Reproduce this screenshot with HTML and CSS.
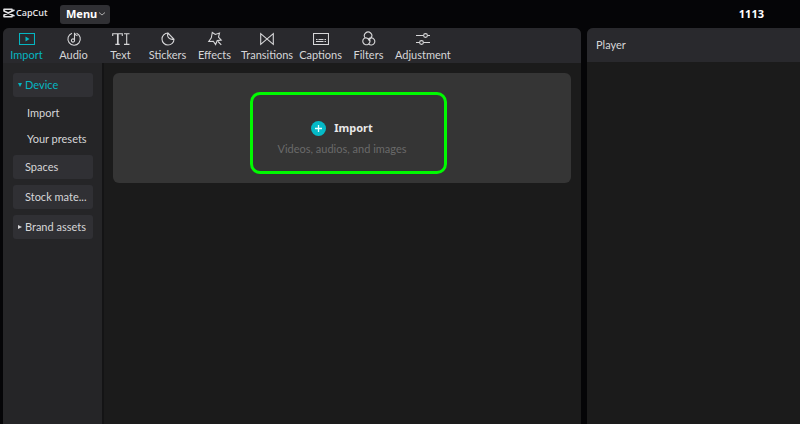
FILE: index.html
```html
<!DOCTYPE html>
<html lang="en">
<head>
<meta charset="utf-8">
<meta name="viewport" content="width=device-width, initial-scale=1">
<title>CapCut</title>
<link rel="stylesheet" href="styles.css">
</head>
<body>
<header class="topbar">
  <div class="brand">
    <svg class="brand-mark" width="12" height="10" viewBox="0 0 12 10" fill="none" stroke="currentColor" stroke-width="1.6" stroke-linejoin="round" aria-hidden="true">
      <path d="M9 3V1.200H1V3L11.500 8M9 7v1.800H1V7L11.500 2"/>
    </svg>
    <span>CapCut</span>
  </div>
  <button class="menu" type="button">Menu
    <svg width="8" height="6" viewBox="0 0 8 6" fill="none" stroke="#aaa" aria-hidden="true"><path d="M1 1.500l3 2.500 3-2.500"/></svg>
  </button>
  <h1 class="project">1113</h1>
</header>
<main class="workspace">
  <section class="panel library">
    <nav class="tabs" aria-label="Library">
      <button class="tab active" type="button">
        <svg class="icon" viewBox="0 0 16 16"><path d="M.5 2.500h15v11H.5z"/><path class="solid" d="M6.500 5.500v5l4-2.500z"/></svg>
        Import</button>
      <button class="tab" type="button">
        <svg class="icon" viewBox="0 0 16 16"><path d="M6 2.200A6.200 6.200 0 1 0 10.500 2.300M8.500 9.500V1.800c.3 1.700 1.200 2.600 3 3"/><circle cx="7" cy="9.500" r="1.600"/></svg>
        Audio</button>
      <button class="tab" type="button">
        <svg class="icon wide" viewBox="0 0 18 16"><path d="M.7 5V2.700h9.600V5M5.500 2.700v10.600M3.300 13.400h4.400M12 2.700h5.500M14.700 2.700v10.600M12 13.400h5.500"/><path d="M6.100 3v10"/></svg>
        Text</button>
      <button class="tab" type="button">
        <svg class="icon" viewBox="0 0 16 16"><path d="M8 2C4.500 2 2 4.700 2 8s2.700 6 6 6 6-2.500 6-5.700L8 2c-1.500 4 1.500 7 6 6.300"/></svg>
        Stickers</button>
      <button class="tab" type="button">
        <svg class="icon" viewBox="0 0 16 16"><path d="M5.300 1.500l3 2 4.200-1.500-1 4.200 2.700 2.900-4 .5-1.600 3.900-2.300-3.300-4.500.3 2.500-3.700zM11 10.500l3.300 3.400"/></svg>
        Effects</button>
      <button class="tab" type="button">
        <svg class="icon" viewBox="0 0 16 16"><path d="M1.700 2.700v10.600L14.300 2.700v10.600z"/></svg>
        Transitions</button>
      <button class="tab" type="button">
        <svg class="icon" viewBox="0 0 16 16"><path d="M.5 2.500h15v11H.5z"/><path d="M3 8.500h1.500M5.500 8.500h5M11.500 8.500H13M3 10.500h7.500M11.500 10.500H13"/></svg>
        Captions</button>
      <button class="tab" type="button">
        <svg class="icon" viewBox="0 0 16 16"><path d="M5.200 7A3.700 3.700 0 1 1 11 7M9.500 8.300A3.600 3.600 0 1 1 5.400 6.700c2 .2 3.500 1.500 4.100 3.300M8 8.600c.7-1.200 2-1.900 3.300-1.800a3.600 3.600 0 1 1-2.800 6M11.500 5.200A3.700 3.700 0 0 1 8 8.500"/></svg>
        Filters</button>
      <button class="tab" type="button">
        <svg class="icon" viewBox="0 0 16 16"><path d="M1 4.500h7.500M12.500 4.500H15M1 11.500h3.500M8.500 11.500H15"/><circle cx="10.500" cy="4.500" r="1.900"/><circle cx="6.500" cy="11.500" r="1.900"/></svg>
        Adjustment</button>
    </nav>
    <div class="library-body">
      <aside class="sidebar">
        <button class="group open" type="button"><span class="arrow down"></span>Device</button>
        <div class="children">
          <button class="child" type="button">Import</button>
          <button class="child" type="button">Your presets</button>
        </div>
        <button class="group" type="button">Spaces</button>
        <button class="group" type="button">Stock mate...</button>
        <button class="group" type="button"><span class="arrow right"></span>Brand assets</button>
      </aside>
      <div class="media">
        <button class="dropzone" type="button">
          <span class="import-title">
            <svg width="15" height="15" viewBox="0 0 15 15" aria-hidden="true"><circle cx="7.500" cy="7.500" r="7.500" fill="#05bac7"/><path d="M7.500 4v7M4 7.500h7" stroke="#e8ffff" stroke-width="1.300"/></svg>
            Import
          </span>
          <span class="import-hint">Videos, audios, and images</span>
          <span class="highlight"></span>
        </button>
      </div>
    </div>
  </section>
  <section class="panel player">
    <h2 class="player-title">Player</h2>
  </section>
</main>
</body>
</html>
```

FILE: styles.css
```css
* {
  box-sizing: border-box;
}

body {
  display: flex;
  flex-direction: column;
  min-height: 100vh;
  margin: 0;
  background: #050507;
  color: #d6d6d8;
  font: 11px/16px Lato, "Noto Sans", sans-serif;
}

button {
  margin: 0;
  padding: 0;
  border: 0;
  background: none;
  color: inherit;
  font: inherit;
  cursor: pointer;
}

.topbar {
  display: grid;
  grid-template-columns: 57px auto 1fr;
  align-items: center;
  height: 28px;
  padding: 0 36px 0 3px;
  font-family: "Noto Sans", sans-serif;
}

.brand {
  display: flex;
  align-items: center;
  gap: 1px;
  padding-bottom: 2px;
  color: #e4e4e6;
  font: 600 9px/12px "Open Sans", sans-serif;
}

.menu {
  display: flex;
  align-items: center;
  gap: 1px;
  height: 19px;
  padding: 0 4px 0 6px;
  border-radius: 3px;
  background: #303034;
  color: #fff;
  font-weight: 700;
}

.project {
  margin: 0;
  color: #fff;
  font-size: 11px;
  font-weight: 700;
  text-align: right;
}

.workspace {
  display: grid;
  flex: 1;
  grid-template-columns: 578fr 213fr;
  gap: 6px;
  padding-left: 3px;
}

.panel {
  display: flex;
  flex-direction: column;
  overflow: hidden;
  border-radius: 6px 6px 0 0;
  background: #1b1b1b;
}

.player {
  border-top-right-radius: 0;
}

.tabs {
  display: flex;
  height: 35px;
  background: #29292d;
}

.tab {
  display: flex;
  flex-direction: column;
  align-items: center;
  min-width: 47px;
  padding: 3px 3px 0;
}

.tab.active,
.group.open {
  color: #05b5c1;
}

.icon {
  width: 16px;
  height: 16px;
  fill: none;
  stroke: currentColor;
  stroke-width: 1.1;
}

.icon.wide {
  width: 18px;
}

.icon .solid {
  fill: currentColor;
  stroke: none;
}

.library-body {
  display: flex;
  flex: 1;
}

.sidebar {
  display: flex;
  flex-direction: column;
  gap: 6px;
  width: 101px;
  padding: 10px 9px 10px 10px;
  border-right: 2px solid #141415;
  background: #252527;
}

.group {
  position: relative;
  height: 24px;
  padding-left: 12px;
  border-radius: 3px;
  background: #303034;
  text-align: left;
  white-space: nowrap;
}

.children {
  display: flex;
  flex-direction: column;
  margin: -3px 0;
  padding-left: 14px;
}

.child {
  height: 26px;
  text-align: left;
}

.arrow {
  position: absolute;
  top: 10px;
  left: 5px;
  border: 2px solid transparent;
}

.arrow.down {
  border-top: 4px solid currentColor;
  border-bottom: 0;
}

.arrow.right {
  border-left: 4px solid currentColor;
  border-right: 0;
}

.media {
  flex: 1;
  padding: 10px 10px 0 9px;
}

.dropzone {
  position: relative;
  display: flex;
  flex-direction: column;
  align-items: center;
  gap: 5px;
  width: 100%;
  padding: 47px 0 26px;
  border-radius: 6px;
  background: #353535;
}

.highlight {
  position: absolute;
  top: 19px;
  left: calc(50% - 92px);
  width: 197px;
  height: 82px;
  border: 3px solid #00fa00;
  border-radius: 10px;
}

.import-title {
  display: flex;
  align-items: center;
  gap: 8px;
  color: #e8e8e8;
  font: 700 11px/16px "Noto Sans", sans-serif;
}

.import-hint {
  color: #6a6a6a;
}

.player-title {
  margin: 0;
  padding: 9px 9px;
  background: #29292d;
  font-size: 11px;
  font-weight: 400;
}
```
